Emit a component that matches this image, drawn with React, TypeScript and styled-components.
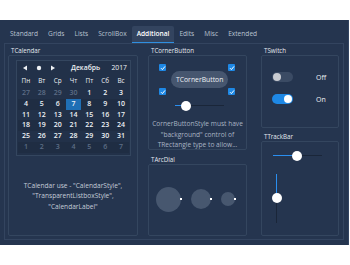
import styled, { createGlobalStyle } from "styled-components";

const GlobalStyle = createGlobalStyle`
  body {
    margin: 0;
    background: #ffffff;
    font-family: "Open Sans", "Noto Sans", sans-serif;
  }
`;

const Window = styled.div`
  margin-top: 20px;
  width: 349px;
  height: 225px;
  background: #25354f;
  border-right: 1px solid #324461;
  box-sizing: border-box;
  display: flex;
  flex-direction: column;
  padding: 0 4px 5px 4px;
`;

const TabBar = styled.div`
  display: flex;
  align-items: flex-end;
  height: 23px;
  padding-left: 1px;
`;

const Tab = styled.div<{ $active?: boolean }>`
  height: 16px;
  line-height: 15px;
  padding: 0 5px;
  font-size: 6.6px;
  color: ${(p) => (p.$active ? "#ffffff" : "#b9c3d1")};
  font-weight: ${(p) => (p.$active ? 600 : 400)};
  background: ${(p) => (p.$active ? "#33445f" : "transparent")};
  border-radius: 2px 2px 0 0;
  border-bottom: 1px solid ${(p) => (p.$active ? "#2f8fe0" : "transparent")};
`;

const Frame = styled.div`
  flex: 1;
  border: 1px solid #33445f;
  display: flex;
  padding: 0 3px 3px 3px;
`;

const Column = styled.div<{ $w: number; $ml?: number }>`
  width: ${(p) => p.$w}px;
  margin-left: ${(p) => p.$ml || 0}px;
  display: flex;
  flex-direction: column;
`;

const GroupLabel = styled.div<{ $mt?: number }>`
  font-size: 6.2px;
  color: #e4e8ee;
  height: 11px;
  line-height: 13px;
  padding-left: 3px;
  margin-top: ${(p) => p.$mt || 0}px;
`;

const GroupBox = styled.div<{ $grow?: boolean; $h?: number }>`
  border: 1px solid #34465f;
  border-radius: 2px;
  box-sizing: border-box;
  ${(p) => (p.$grow ? "flex: 1;" : "")}
  ${(p) => (p.$h ? `height: ${p.$h}px;` : "")}
  display: flex;
  flex-direction: column;
`;

/* Calendar */
const Calendar = styled.div`
  margin: 4px 6px 0 7px;
  border: 1px solid #34465f;
  background: #223149;
  padding: 0 0 2px 0;
  color: #eef1f5;
`;

const CalHeader = styled.div`
  display: flex;
  align-items: center;
  height: 13px;
  padding: 0 3px 0 5px;
  font-size: 6.8px;
`;

const NavIcons = styled.div`
  display: flex;
  align-items: center;
  gap: 8px;
  width: 49px;
`;

const Month = styled.div`
  flex: 1;
  font-weight: 600;
`;

const Year = styled.div``;

const DayGrid = styled.div`
  display: grid;
  grid-template-columns: repeat(7, 1fr);
  padding: 0 1px;
`;

const Cell = styled.div<{ $head?: boolean; $dim?: boolean; $sel?: boolean; $dark?: boolean }>`
  height: ${(p) => (p.$head ? "14px" : "10.8px")};
  line-height: ${(p) => (p.$head ? "14px" : "10.8px")};
  text-align: center;
  font-size: ${(p) => (p.$head ? "6.4px" : "7px")};
  font-weight: ${(p) => (p.$head ? 400 : 600)};
  color: ${(p) => (p.$dim ? "#5d6d86" : "#eef1f5")};
  background: ${(p) => (p.$sel ? "#1f6fb5" : p.$dark ? "#1f2d43" : "transparent")};
`;

const Note = styled.div`
  font-size: 6.6px;
  line-height: 10.6px;
  color: #c4ccd8;
  text-align: center;
  white-space: nowrap;
`;

const CalNote = styled(Note)`
  margin-top: 25px;
`;

/* Corner button */
const CornerArea = styled.div`
  display: grid;
  grid-template-columns: 12px 1fr 12px;
  grid-template-rows: 11px 13px 11px;
  padding: 6px 10px 0 10px;
  align-items: center;
`;

const Check = styled.div<{ $col?: number; $row?: number }>`
  grid-column: ${(p) => p.$col || 1};
  grid-row: ${(p) => p.$row || 1};
  width: 7px;
  height: 7px;
  background: #1e88e5;
  border-radius: 1px;
  display: flex;
  align-items: center;
  justify-content: center;
`;

const PillButton = styled.div`
  grid-column: 2;
  grid-row: 1 / span 3;
  justify-self: center;
  align-self: center;
  height: 17px;
  padding: 0 5px;
  border-radius: 9px;
  background: #46566f;
  color: #eef1f5;
  font-size: 6.8px;
  line-height: 17px;
`;

const HTrack = styled.div<{ $w: number }>`
  position: relative;
  width: ${(p) => p.$w}px;
  height: 1px;
  background: #1a2639;
`;

const VTrack = styled.div<{ $h: number }>`
  position: relative;
  width: 1px;
  height: ${(p) => p.$h}px;
  background: #1a2639;
`;

const Fill = styled.div`
  position: absolute;
  left: 0;
  top: 0;
  background: #2a8ff0;
`;

const Thumb = styled.div`
  position: absolute;
  width: 10px;
  height: 10px;
  border-radius: 50%;
  background: #ffffff;
  transform: translate(-50%, -50%);
`;

const SliderRow = styled.div`
  display: flex;
  justify-content: center;
  padding: 8px 0 0 3px;
  height: 8px;
  align-items: center;
`;

const CornerNote = styled(Note)`
  margin-top: 13px;
  color: #a9b4c3;
`;

/* Arc dial */
const DialRow = styled.div`
  flex: 1;
  display: flex;
  align-items: center;
  padding: 0 0 2px 7px;
  gap: 10px;
`;

const Dial = styled.div<{ $size: number }>`
  position: relative;
  width: ${(p) => p.$size}px;
  height: ${(p) => p.$size}px;
  border-radius: 50%;
  background: #47576f;
`;

const DialDot = styled.div`
  position: absolute;
  right: -1px;
  top: 50%;
  width: 2px;
  height: 2px;
  margin-top: -1px;
  background: #ffffff;
`;

/* Switch */
const SwitchList = styled.div`
  display: flex;
  flex-direction: column;
  gap: 12px;
  padding: 16px 0 0 10px;
`;

const SwitchRow = styled.div`
  display: flex;
  align-items: center;
  gap: 23px;
`;

const SwitchTrack = styled.div<{ $on?: boolean }>`
  width: 21px;
  height: 10px;
  border-radius: 5px;
  background: ${(p) => (p.$on ? "#1e88e5" : "#3b4b64")};
  display: flex;
  align-items: center;
  justify-content: ${(p) => (p.$on ? "flex-end" : "flex-start")};
  padding: 0 1px;
  box-sizing: border-box;
`;

const SwitchKnob = styled.div<{ $on?: boolean }>`
  width: 8px;
  height: 8px;
  border-radius: 50%;
  background: ${(p) => (p.$on ? "#ffffff" : "#c9ccd2")};
`;

const SwitchText = styled.div`
  font-size: 7px;
  color: #eef1f5;
`;

const TrackArea = styled.div`
  display: flex;
  flex-direction: column;
  padding: 13px 0 0 11px;
`;

const VWrap = styled.div`
  padding: 18px 0 0 3px;
`;

const weeks: { d: number; dim?: boolean }[][] = [
  [{ d: 27, dim: true }, { d: 28, dim: true }, { d: 29, dim: true }, { d: 30, dim: true }, { d: 1 }, { d: 2 }, { d: 3 }],
  [4, 5, 6, 7, 8, 9, 10].map((d) => ({ d })),
  [11, 12, 13, 14, 15, 16, 17].map((d) => ({ d })),
  [18, 19, 20, 21, 22, 23, 24].map((d) => ({ d })),
  [25, 26, 27, 28, 29, 30, 31].map((d) => ({ d })),
  [1, 2, 3, 4, 5, 6, 7].map((d) => ({ d, dim: true })),
];

const dayNames = ["Пн", "Вт", "Ср", "Чт", "Пт", "Сб", "Вс"];
const tabs = ["Standard", "Grids", "Lists", "ScrollBox", "Additional", "Edits", "Misc", "Extended"];

function CheckMark() {
  return (
    <svg width="6" height="6" viewBox="0 0 6 6">
      <path d="M1 3.2 L2.4 4.6 L5 1.4" stroke="#fff" strokeWidth="1" fill="none" />
    </svg>
  );
}

export default function App() {
  return (
    <>
      <GlobalStyle />
      <Window>
        <TabBar>
          {tabs.map((t) => (
            <Tab key={t} $active={t === "Additional"}>
              {t}
            </Tab>
          ))}
        </TabBar>
        <Frame>
          <Column $w={130}>
            <GroupLabel>TCalendar</GroupLabel>
            <GroupBox $grow>
              <Calendar>
                <CalHeader>
                  <NavIcons>
                    <svg width="6" height="6" viewBox="0 0 6 6">
                      <path d="M5 0.5 L1 3 L5 5.5 Z" fill="#eef1f5" />
                    </svg>
                    <svg width="6" height="6" viewBox="0 0 6 6">
                      <circle cx="3" cy="3" r="2.2" fill="#eef1f5" />
                    </svg>
                    <svg width="6" height="6" viewBox="0 0 6 6">
                      <path d="M1 0.5 L5 3 L1 5.5 Z" fill="#eef1f5" />
                    </svg>
                  </NavIcons>
                  <Month>Декабрь</Month>
                  <Year>2017</Year>
                </CalHeader>
                <DayGrid>
                  {dayNames.map((n) => (
                    <Cell key={n} $head>
                      {n}
                    </Cell>
                  ))}
                  {weeks.map((w, wi) =>
                    w.map((c, ci) => (
                      <Cell
                        key={`${wi}-${ci}`}
                        $dim={c.dim}
                        $dark={wi % 2 === 1}
                        $sel={wi === 1 && c.d === 7}
                      >
                        {c.d}
                      </Cell>
                    ))
                  )}
                </DayGrid>
              </Calendar>
              <CalNote>
                TCalendar use - "CalendarStyle",
                <br />
                "TransparentListboxStyle",
                <br />
                "CalendarLabel"
              </CalNote>
            </GroupBox>
          </Column>

          <Column $w={99} $ml={10}>
            <GroupLabel>TCornerButton</GroupLabel>
            <GroupBox $h={95}>
              <CornerArea>
                <Check>
                  <CheckMark />
                </Check>
                <PillButton>TCornerButton</PillButton>
                <Check $col={3}>
                  <CheckMark />
                </Check>
                <Check $row={3}>
                  <CheckMark />
                </Check>
                <Check $row={3} $col={3}>
                  <CheckMark />
                </Check>
              </CornerArea>
              <SliderRow>
                <HTrack $w={49}>
                  <Fill style={{ width: 11, height: 1 }} />
                  <Thumb style={{ left: 11, top: 0.5 }} />
                </HTrack>
              </SliderRow>
              <CornerNote>
                CornerButtonStyle must have
                <br />
                "background" control of
                <br />
                TRectangle type to allow...
              </CornerNote>
            </GroupBox>
            <GroupLabel $mt={3}>TArcDial</GroupLabel>
            <GroupBox $grow>
              <DialRow>
                <Dial $size={25}>
                  <DialDot />
                </Dial>
                <Dial $size={20}>
                  <DialDot />
                </Dial>
                <Dial $size={14}>
                  <DialDot />
                </Dial>
              </DialRow>
            </GroupBox>
          </Column>

          <Column $w={78} $ml={14}>
            <GroupLabel>TSwitch</GroupLabel>
            <GroupBox $h={73}>
              <SwitchList>
                <SwitchRow>
                  <SwitchTrack>
                    <SwitchKnob />
                  </SwitchTrack>
                  <SwitchText>Off</SwitchText>
                </SwitchRow>
                <SwitchRow>
                  <SwitchTrack $on>
                    <SwitchKnob $on />
                  </SwitchTrack>
                  <SwitchText>On</SwitchText>
                </SwitchRow>
              </SwitchList>
            </GroupBox>
            <GroupLabel $mt={2}>TTrackBar</GroupLabel>
            <GroupBox $grow>
              <TrackArea>
                <HTrack $w={49}>
                  <Fill style={{ width: 24, height: 1 }} />
                  <Thumb style={{ left: 24, top: 0.5 }} />
                </HTrack>
                <VWrap>
                  <VTrack $h={49}>
                    <Fill style={{ width: 1, height: 24 }} />
                    <Thumb style={{ left: 0.5, top: 24 }} />
                  </VTrack>
                </VWrap>
              </TrackArea>
            </GroupBox>
          </Column>
        </Frame>
      </Window>
    </>
  );
}
